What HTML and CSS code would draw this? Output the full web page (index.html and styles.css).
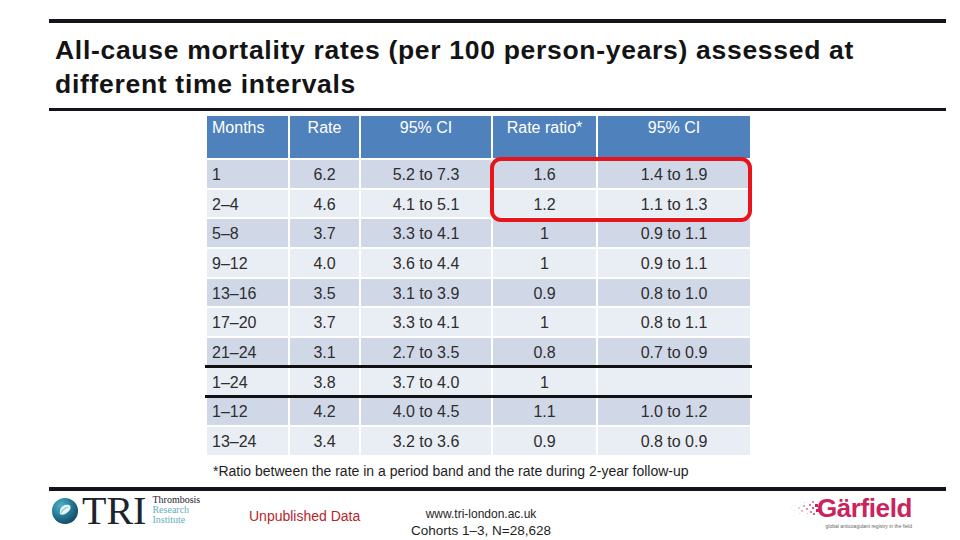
FILE: index.html
```html
<!DOCTYPE html>
<html>
<head>
<meta charset="utf-8">
<link rel="stylesheet" href="styles.css">
</head>
<body>
<div class="slide">
  <div class="bar"></div>
  <h1 class="title">All-cause mortality rates (per 100 person-years) assessed at different time intervals</h1>
  <div class="bar thin"></div>

  <div class="table">
    <div class="row head">
      <div class="c l">Months</div><div class="c">Rate</div><div class="c">95% CI</div><div class="c">Rate ratio*</div><div class="c">95% CI</div>
    </div>
    <div class="row dark"><div class="c l">1</div><div class="c">6.2</div><div class="c">5.2 to 7.3</div><div class="c">1.6</div><div class="c">1.4 to 1.9</div></div>
    <div class="row light"><div class="c l">2–4</div><div class="c">4.6</div><div class="c">4.1 to 5.1</div><div class="c">1.2</div><div class="c">1.1 to 1.3</div></div>
    <div class="row dark"><div class="c l">5–8</div><div class="c">3.7</div><div class="c">3.3 to 4.1</div><div class="c">1</div><div class="c">0.9 to 1.1</div></div>
    <div class="row light"><div class="c l">9–12</div><div class="c">4.0</div><div class="c">3.6 to 4.4</div><div class="c">1</div><div class="c">0.9 to 1.1</div></div>
    <div class="row dark"><div class="c l">13–16</div><div class="c">3.5</div><div class="c">3.1 to 3.9</div><div class="c">0.9</div><div class="c">0.8 to 1.0</div></div>
    <div class="row light"><div class="c l">17–20</div><div class="c">3.7</div><div class="c">3.3 to 4.1</div><div class="c">1</div><div class="c">0.8 to 1.1</div></div>
    <div class="row dark"><div class="c l">21–24</div><div class="c">3.1</div><div class="c">2.7 to 3.5</div><div class="c">0.8</div><div class="c">0.7 to 0.9</div></div>
    <div class="sep"></div>
    <div class="row light"><div class="c l">1–24</div><div class="c">3.8</div><div class="c">3.7 to 4.0</div><div class="c">1</div><div class="c"></div></div>
    <div class="sep"></div>
    <div class="row dark"><div class="c l">1–12</div><div class="c">4.2</div><div class="c">4.0 to 4.5</div><div class="c">1.1</div><div class="c">1.0 to 1.2</div></div>
    <div class="row light"><div class="c l">13–24</div><div class="c">3.4</div><div class="c">3.2 to 3.6</div><div class="c">0.9</div><div class="c">0.8 to 0.9</div></div>
    <div class="highlight"></div>
  </div>

  <p class="note">*Ratio between the rate in a period band and the rate during 2-year follow-up</p>
  <div class="bar foot"></div>

  <div class="footer">
    <div class="tri">
      <svg class="orb" width="28" height="28" viewBox="0 0 28 28">
        <defs>
          <radialGradient id="og" cx="0.35" cy="0.3" r="0.8">
            <stop offset="0" stop-color="#4fb3c8"/>
            <stop offset="0.6" stop-color="#1f6f8c"/>
            <stop offset="1" stop-color="#123f57"/>
          </radialGradient>
        </defs>
        <circle cx="14" cy="14" r="13" fill="url(#og)"/>
        <path d="M9 17 C8 11 12 7 18 8 C20 9 20 12 18 14 C15 17 11 19 9 17 Z" fill="#e8f4f6"/>
        <path d="M10 16 C11 13 14 11 17 10" stroke="#7cc6d3" stroke-width="1.2" fill="none"/>
      </svg>
      <span class="tri-word">TRI</span>
      <span class="tri-sub"><span class="k">Thrombosis</span><span>Research</span><span>Institute</span></span>
    </div>
    <div class="unpub">Unpublished Data</div>
    <div class="center">
      <span class="url">www.tri-london.ac.uk</span>
      <span class="coh">Cohorts 1–3, N=28,628</span>
    </div>
    <div class="garfield">
      <div class="gline">
        <svg class="spray" width="30" height="20" viewBox="0 0 30 20">
          <g fill="#c9245c">
            <rect x="26" y="5" width="3" height="3"/><rect x="27" y="10" width="3" height="3"/><rect x="23" y="8" width="2" height="2" opacity="0.8"/>
            <rect x="20" y="5" width="2" height="2" opacity="0.6"/><rect x="21" y="12" width="2" height="2" opacity="0.6"/><rect x="17" y="9" width="2" height="2" opacity="0.5"/>
            <rect x="14" y="6" width="2" height="2" opacity="0.4"/><rect x="12" y="11" width="2" height="2" opacity="0.35"/><rect x="9" y="8" width="2" height="2" opacity="0.25"/>
            <rect x="5" y="11" width="1" height="1" opacity="0.2"/><rect x="24" y="14" width="2" height="2" opacity="0.7"/><rect x="18" y="14" width="1" height="1" opacity="0.4"/>
            <rect x="15" y="3" width="1" height="1" opacity="0.3"/><rect x="10" y="14" width="1" height="1" opacity="0.2"/><rect x="23" y="2" width="2" height="2" opacity="0.5"/>
            <rect x="2" y="9" width="1" height="1" opacity="0.15"/><rect x="6" y="6" width="1" height="1" opacity="0.15"/>
          </g>
        </svg>
        <span class="gword">Gärfield</span>
      </div>
      <div class="tag">global anticoagulant registry in the field</div>
    </div>
  </div>
</div>
</body>
</html>
```

FILE: styles.css
```css
* { box-sizing: border-box; }
html, body { margin: 0; padding: 0; background: #fff; }
.slide {
  width: 960px;
  height: 540px;
  padding: 19px 14px 0 49px;
  font-family: "Liberation Sans", Arial, sans-serif;
  overflow: hidden;
}
.bar { height: 4px; background: #14141c; }
.bar.thin { height: 3px; }
.title {
  margin: 0;
  padding: 10px 6px 7px;
  max-width: 840px;
  font-size: 26.5px;
  line-height: 34px;
  font-weight: bold;
  letter-spacing: 0.7px;
  color: #141414;
}
.table {
  position: relative;
  margin: 5px 0 0 158px;
  width: 543px;
  display: flex;
  flex-direction: column;
  gap: 2px;
}
.row {
  display: grid;
  grid-template-columns: 81px 69px 130px 103px 152px;
  column-gap: 2px;
  height: 27.7px;
}
.row.head { height: 42px; }
.c {
  display: flex;
  align-items: center;
  justify-content: center;
  padding-top: 2px;
  font-size: 16px;
  color: #2e2e2e;
  white-space: nowrap;
}
.c.l { justify-content: flex-start; padding-left: 5px; }
.head .c {
  background: #4f81bd;
  color: #fff;
  align-items: flex-start;
  padding-top: 3px;
}
.dark .c { background: #d0d8e8; }
.light .c { background: #e9edf4; }
.sep {
  height: 3px;
  background: #111;
  margin: -2.5px -2px;
}
.highlight {
  position: absolute;
  left: 283px;
  top: 41px;
  width: 262px;
  height: 65px;
  border: 4px solid #e8141b;
  border-radius: 11px;
}
.note {
  margin: 6px 0 0 164px;
  font-size: 14px;
  line-height: 20px;
  color: #1e1e1e;
}
.bar.foot { margin-top: 6px; height: 4px; }
.footer {
  display: grid;
  grid-template-columns: 199px 152px 160px 1fr;
  padding-top: 5px;
  padding-left: 1px;
}
.tri { display: flex; align-items: center; height: 30px; }
.orb { margin-left: 1px; }
.tri-word {
  font-family: "Liberation Serif", "Times New Roman", serif;
  font-size: 40px;
  line-height: 30px;
  color: #1d2430;
  margin-left: 3px;
}
.tri-sub {
  display: flex;
  flex-direction: column;
  font-family: "Liberation Serif", serif;
  font-size: 10px;
  line-height: 10px;
  color: #5fb0bc;
  margin-left: 6px;
  margin-top: -2px;
}
.tri-sub .k { color: #1d2430; }
.unpub {
  font-size: 14px;
  color: #b8262d;
  padding-top: 12px;
}
.center {
  display: flex;
  flex-direction: column;
  align-items: center;
  padding-top: 10px;
  color: #1e1e1e;
}
.url { font-size: 12px; line-height: 16px; }
.coh { font-size: 13.5px; line-height: 17px; }
.garfield {
  justify-self: end;
  margin-right: 34px;
  margin-top: -3px;
  display: flex;
  flex-direction: column;
  align-items: flex-end;
}
.gline { display: flex; align-items: center; }
.spray { margin-right: -2px; margin-top: 2px; }
.gword {
  font-family: "Liberation Sans", Arial, sans-serif;
  font-weight: bold;
  font-size: 26px;
  line-height: 30px;
  color: #c9245c;
  letter-spacing: -0.4px;
}
.tag {
  font-size: 5px;
  line-height: 6px;
  color: #666;
}
```
